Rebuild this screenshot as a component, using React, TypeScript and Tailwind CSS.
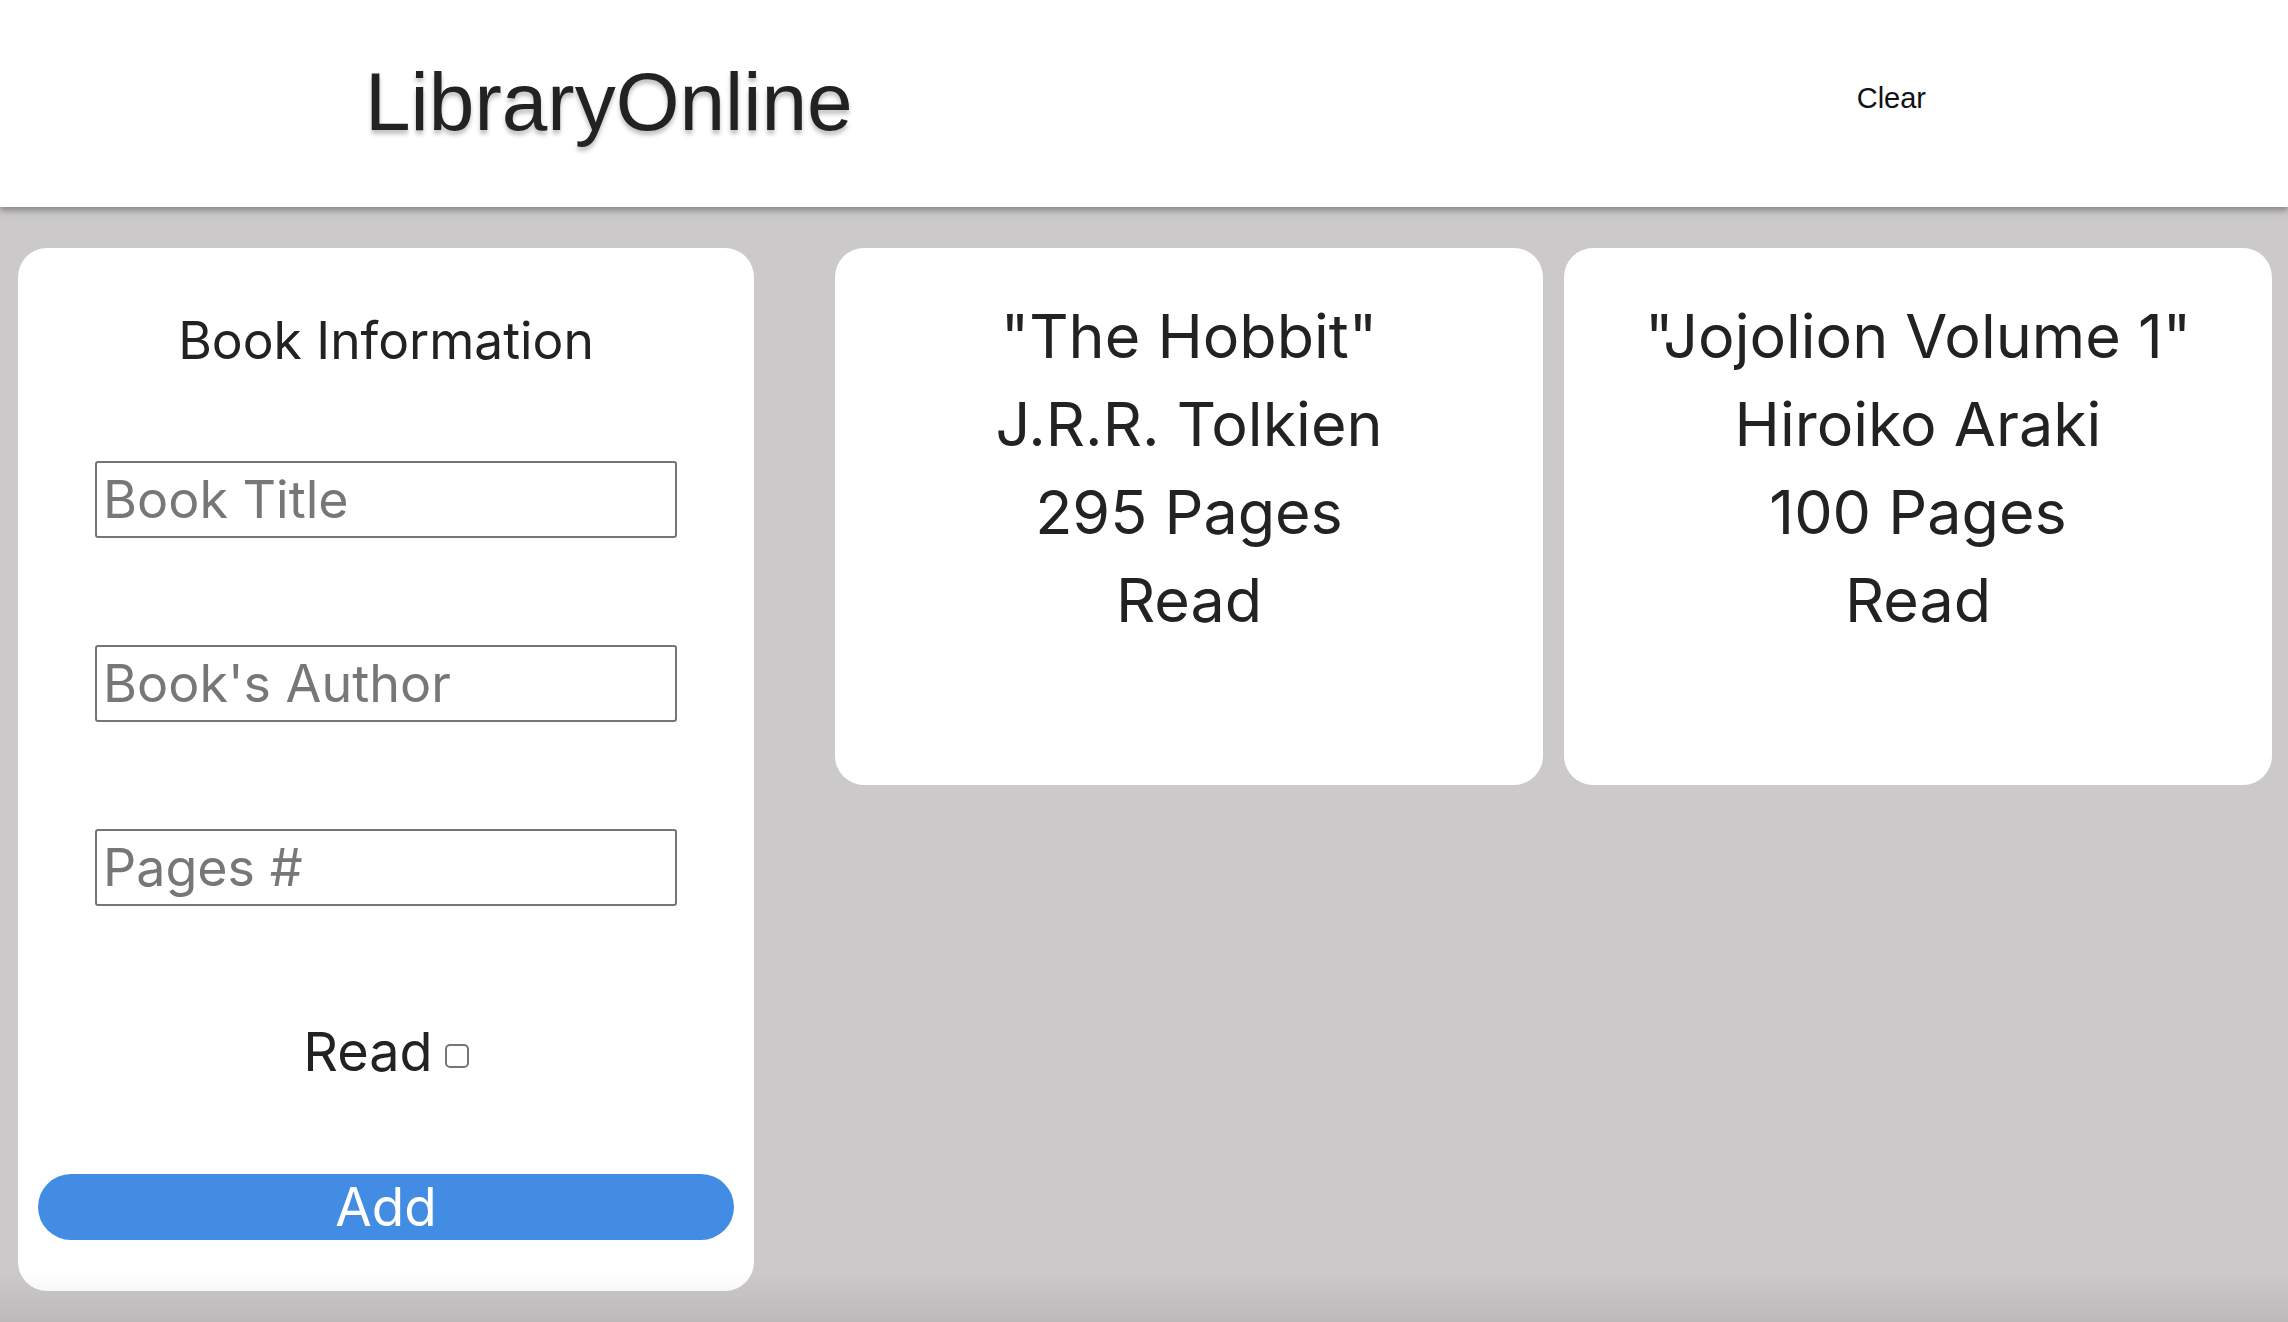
import React from "react";

const books = [
  { title: "The Hobbit", author: "J.R.R. Tolkien", pages: 295, read: true },
  { title: "Jojolion Volume 1", author: "Hiroiko Araki", pages: 100, read: true },
];

const App = () => {
  return (
    <div className="min-h-[1322px] bg-[#cbc9ca] font-['Inter',sans-serif] text-[#222] relative overflow-hidden">
      <header className="h-[207px] bg-white flex items-center shadow-[0_4px_6px_rgba(0,0,0,0.3)] relative z-10">
        <h1 className="ml-[365px] text-[82px] font-['Liberation_Sans',sans-serif] text-[#222] [text-shadow:0_4px_4px_rgba(0,0,0,0.25)] leading-none -mt-[4px]">
          LibraryOnline
        </h1>
        <button className="ml-auto mr-[362px] text-[29px] font-['Liberation_Sans',sans-serif] text-[#111] -mt-[10px]">
          Clear
        </button>
      </header>

      <main className="flex items-start pt-[41px] pl-[18px]">
        <form className="w-[736px] h-[1043px] bg-white rounded-[29px] flex flex-col items-center pt-[60px]">
          <h2 className="text-[51.5px] leading-[64px]">Book Information</h2>
          <div className="mt-[89px] flex flex-col gap-[107px] w-[582px]">
            <input
              className="h-[77px] border-2 border-[#767676] rounded-[3px] px-[6px] text-[52px] placeholder:text-[#777] outline-none"
              placeholder="Book Title"
            />
            <input
              className="h-[77px] border-2 border-[#767676] rounded-[3px] px-[6px] text-[52px] placeholder:text-[#777] outline-none"
              placeholder="Book's Author"
            />
            <input
              className="h-[77px] border-2 border-[#767676] rounded-[3px] px-[6px] text-[52px] placeholder:text-[#777] outline-none"
              placeholder="Pages #"
            />
          </div>
          <label className="mt-[111px] flex items-center gap-[12px] text-[54px] leading-[70px]">
            Read
            <span className="mt-[8px] w-[24px] h-[24px] border-2 border-[#767676] rounded-[5px] bg-white inline-block" />
          </label>
          <button
            type="button"
            className="mt-[87px] w-[696px] h-[66px] rounded-full bg-[#438ce3] text-white text-[53px] leading-none"
          >
            Add
          </button>
        </form>

        <div className="ml-[81px] flex gap-[21px]">
          {books.map((b, i) => (
            <div
              key={i}
              className="w-[708px] h-[537px] bg-white rounded-[29px] flex flex-col items-center pt-[44px] text-[61px] leading-[88px]"
            >
              <p>"{b.title}"</p>
              <p>{b.author}</p>
              <p>{b.pages} Pages</p>
              <p>{b.read ? "Read" : "Not Read"}</p>
            </div>
          ))}
        </div>
      </main>

      <div className="absolute left-0 right-0 bottom-0 h-[50px] bg-gradient-to-b from-transparent to-[rgba(0,0,0,0.08)] pointer-events-none" />
    </div>
  );
};

export default App;
